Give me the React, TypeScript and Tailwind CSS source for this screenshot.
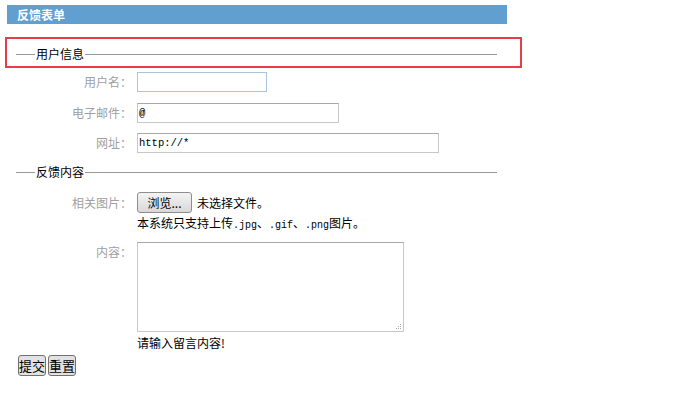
import React from "react";

const cjk = { fontFamily: '"Noto Sans CJK SC", "Liberation Sans", sans-serif' };
const mono = { fontFamily: '"Liberation Mono", "Noto Sans CJK SC", monospace' };

function Legend({ text }: { text: string }) {
  return (
    <div className="flex items-center w-[481px] h-[14px]">
      <div className="w-[19px] h-px bg-[#999]" />
      <span className="text-[12px] leading-[14px] text-black px-px">{text}</span>
      <div className="flex-1 h-px bg-[#999]" />
    </div>
  );
}

function Row({ label, children, top }: { label: string; children: React.ReactNode; top?: boolean }) {
  return (
    <div className={`flex ${top ? "items-start" : "items-center"}`}>
      <div className="w-[133px] text-right text-[12px] leading-[20px] text-[#a0a0a0] pr-px">{label}</div>
      <div className="ml-[4px]">{children}</div>
    </div>
  );
}

export default function App() {
  return (
    <div className="w-[677px] h-[394px] bg-white relative" style={cjk}>
      <div className="pt-[5px] pl-[7px]">
        <div className="w-[500px] h-[19px] bg-[#609fcf] pl-[10px] text-white font-bold text-[12px] leading-[19px]">
          反馈表单
        </div>
      </div>

      <div className="mt-[13px] ml-[5px] w-[517px] h-[31px] border-2 border-[#e63e48] pl-[9px] pt-[8px]">
        <Legend text="用户信息" />
      </div>

      <div className="mt-[4px]">
        <Row label="用户名：">
          <div className="w-[130px] h-[20px] border border-[#a9c4dc]" />
        </Row>
      </div>
      <div className="mt-[11px]">
        <Row label="电子邮件：">
          <div className="w-[202px] h-[20px] border border-[#c8c8c8] border-t-[#a8a8a8] text-[10.5px] leading-[18px] pl-px text-black font-bold" style={mono}>@</div>
        </Row>
      </div>
      <div className="mt-[10px]">
        <Row label="网址：">
          <div className="w-[302px] h-[20px] border border-[#c8c8c8] border-t-[#a8a8a8] text-[10.5px] leading-[18px] pl-px text-black" style={mono}>http://*</div>
        </Row>
      </div>

      <div className="mt-[12px] ml-[16px]">
        <Legend text="反馈内容" />
      </div>

      <div className="mt-[13px]">
        <Row label="相关图片：">
          <div className="flex items-center">
            <div className="w-[55px] h-[21px] border border-[#8e8e8e] rounded-[3px] bg-gradient-to-b from-[#f4f4f4] to-[#d8d8d8] text-[12px] leading-[19px] text-center text-black">
              浏览...
            </div>
            <span className="ml-[5px] text-[12px] text-black">未选择文件。</span>
          </div>
        </Row>
      </div>
      <div className="ml-[137px] mt-[2px] text-[12px] leading-[16px] text-black">
        本系统只支持上传<span style={mono} className="text-[10px]">.jpg</span>、<span style={mono} className="text-[10px]">.gif</span>、<span style={mono} className="text-[10px]">.png</span>图片。
      </div>

      <div className="mt-[8px]">
        <Row label="内容：" top>
          <div className="relative w-[267px] h-[90px] border border-[#c8c8c8] border-t-[#a8a8a8]">
            <svg className="absolute right-[1px] bottom-[1px]" width="8" height="8" viewBox="0 0 8 8">
              <rect x="6" y="2" width="1" height="1" fill="#aaa" />
              <rect x="4" y="4" width="1" height="1" fill="#aaa" />
              <rect x="6" y="4" width="1" height="1" fill="#aaa" />
              <rect x="2" y="6" width="1" height="1" fill="#aaa" />
              <rect x="4" y="6" width="1" height="1" fill="#aaa" />
              <rect x="6" y="6" width="1" height="1" fill="#aaa" />
            </svg>
          </div>
        </Row>
      </div>
      <div className="ml-[137px] mt-[3px] text-[12px] leading-[16px] text-black">请输入留言内容!</div>

      <div className="ml-[18px] mt-[4px] flex gap-[2px]">
        <div className="w-[28px] h-[21px] border border-[#707070] rounded-[3px] bg-[#e2e2e2] text-[13px] leading-[19px] text-center text-black">提交</div>
        <div className="w-[28px] h-[21px] border border-[#707070] rounded-[3px] bg-[#e2e2e2] text-[13px] leading-[19px] text-center text-black">重置</div>
      </div>
    </div>
  );
}
